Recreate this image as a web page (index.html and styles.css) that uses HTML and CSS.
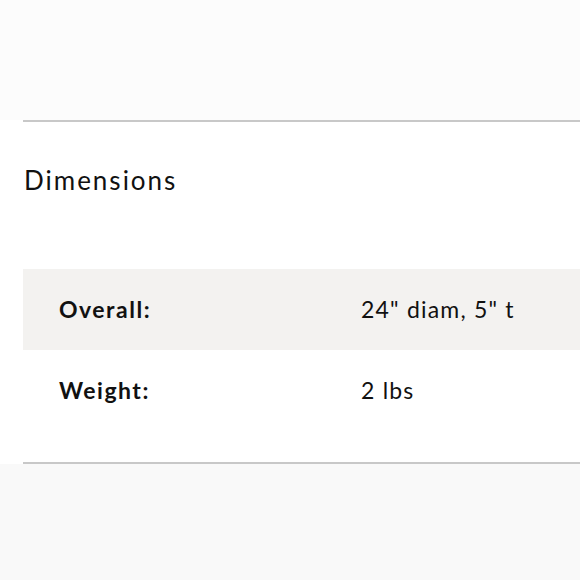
FILE: index.html
```html
<!DOCTYPE html>
<html>
<head>
<meta charset="utf-8">
<link rel="stylesheet" href="styles.css">
</head>
<body>
<div class="top"></div>
<section class="spec">
  <h2 class="title">Dimensions</h2>
  <div class="table">
    <div class="row shaded">
      <div class="label">Overall:</div>
      <div class="value">24" diam, 5" t</div>
    </div>
    <div class="row">
      <div class="label">Weight:</div>
      <div class="value">2 lbs</div>
    </div>
  </div>
</section>
<div class="bottom"></div>
</body>
</html>
```
FILE: styles.css
```css
html, body {
  margin: 0;
  padding: 0;
  background: #ffffff;
  font-family: "Lato", "Noto Sans", sans-serif;
  color: #111111;
}
.top {
  height: 120px;
  background: #fcfcfc;
}
.spec {
  margin-left: 23px;
  border-top: 2px solid #c8c8c8;
  border-bottom: 2px solid #c8c8c8;
  background: #ffffff;
}
.title {
  margin: 0;
  padding: 42px 0 0 1px;
  height: 147px;
  box-sizing: border-box;
  font-size: 26px;
  font-weight: 400;
  line-height: 32px;
  letter-spacing: 2px;
}
.table {
  padding-bottom: 31px;
}
.row {
  display: grid;
  grid-template-columns: 302px 1fr;
  height: 81px;
  align-items: center;
  padding-left: 36px;
  padding-bottom: 2px;
  box-sizing: border-box;
  font-size: 23px;
}
.row.shaded {
  background: #f3f2f0;
}
.label {
  font-weight: 700;
  letter-spacing: 1.5px;
}
.value {
  font-weight: 400;
  letter-spacing: 1.2px;
}
.bottom {
  height: 130px;
  background: #f9f9f9;
}
```
